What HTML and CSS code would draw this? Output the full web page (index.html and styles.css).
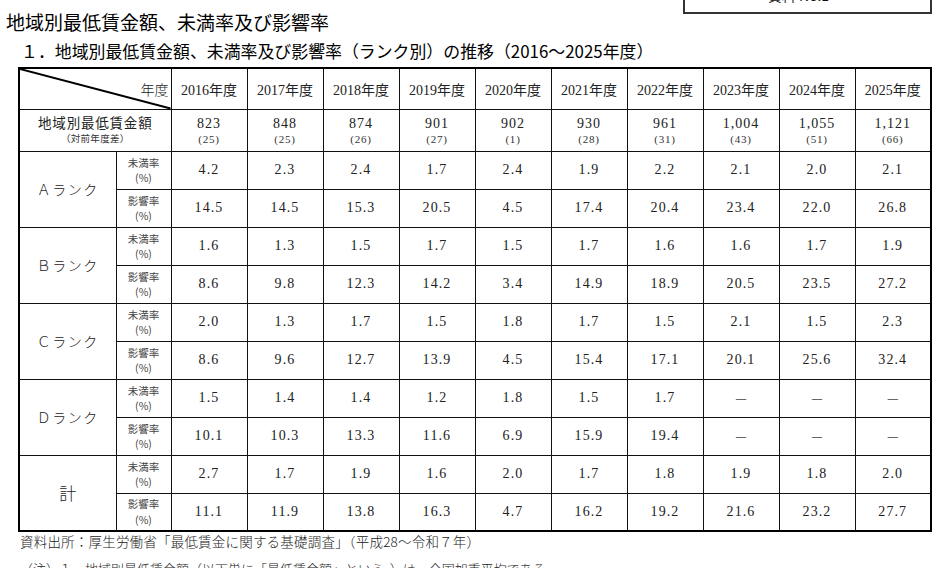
FILE: index.html
```html
<!DOCTYPE html>
<html lang="ja">
<head>
<meta charset="utf-8">
<title>地域別最低賃金額、未満率及び影響率</title>
<link rel="stylesheet" href="styles.css">
</head>
<body>
<div class="page">
  <div class="docno">資料 No.1</div>
  <h1 class="title">地域別最低賃金額、未満率及び影響率</h1>
  <h2 class="subtitle">１．地域別最低賃金額、未満率及び影響率（ランク別）の推移（2016～2025年度）</h2>
  <table class="tbl">
    <colgroup>
      <col class="c-rank"><col class="c-sub">
      <col><col><col><col><col><col><col><col><col><col>
    </colgroup>
    <tr class="r-head">
      <th colspan="2" class="corner">
        <svg class="diag" viewBox="0 0 100 100" preserveAspectRatio="none"><line x1="0" y1="0" x2="100" y2="100" stroke="#000" stroke-width="2" vector-effect="non-scaling-stroke"/></svg>
        <span class="corner-label">年度</span>
      </th>
      <th>2016年度</th><th>2017年度</th><th>2018年度</th><th>2019年度</th><th>2020年度</th><th>2021年度</th><th>2022年度</th><th>2023年度</th><th>2024年度</th><th>2025年度</th>
    </tr>
    <tr class="r-wage">
      <td colspan="2" class="wage-label"><div class="wl-main">地域別最低賃金額</div><div class="wl-sub">（対前年度差）</div></td>
      <td><div class="w-val">823</div><div class="w-diff">(25)</div></td>
      <td><div class="w-val">848</div><div class="w-diff">(25)</div></td>
      <td><div class="w-val">874</div><div class="w-diff">(26)</div></td>
      <td><div class="w-val">901</div><div class="w-diff">(27)</div></td>
      <td><div class="w-val">902</div><div class="w-diff">(1)</div></td>
      <td><div class="w-val">930</div><div class="w-diff">(28)</div></td>
      <td><div class="w-val">961</div><div class="w-diff">(31)</div></td>
      <td><div class="w-val">1,004</div><div class="w-diff">(43)</div></td>
      <td><div class="w-val">1,055</div><div class="w-diff">(51)</div></td>
      <td><div class="w-val">1,121</div><div class="w-diff">(66)</div></td>
    </tr>
    <tr class="r-data">
      <td rowspan="2" class="rank">Ａランク</td>
      <td class="sub"><div>未満率</div><div>(%)</div></td>
      <td>4.2</td><td>2.3</td><td>2.4</td><td>1.7</td><td>2.4</td><td>1.9</td><td>2.2</td><td>2.1</td><td>2.0</td><td>2.1</td>
    </tr>
    <tr class="r-data">
      <td class="sub"><div>影響率</div><div>(%)</div></td>
      <td>14.5</td><td>14.5</td><td>15.3</td><td>20.5</td><td>4.5</td><td>17.4</td><td>20.4</td><td>23.4</td><td>22.0</td><td>26.8</td>
    </tr>
    <tr class="r-data">
      <td rowspan="2" class="rank">Ｂランク</td>
      <td class="sub"><div>未満率</div><div>(%)</div></td>
      <td>1.6</td><td>1.3</td><td>1.5</td><td>1.7</td><td>1.5</td><td>1.7</td><td>1.6</td><td>1.6</td><td>1.7</td><td>1.9</td>
    </tr>
    <tr class="r-data">
      <td class="sub"><div>影響率</div><div>(%)</div></td>
      <td>8.6</td><td>9.8</td><td>12.3</td><td>14.2</td><td>3.4</td><td>14.9</td><td>18.9</td><td>20.5</td><td>23.5</td><td>27.2</td>
    </tr>
    <tr class="r-data">
      <td rowspan="2" class="rank">Ｃランク</td>
      <td class="sub"><div>未満率</div><div>(%)</div></td>
      <td>2.0</td><td>1.3</td><td>1.7</td><td>1.5</td><td>1.8</td><td>1.7</td><td>1.5</td><td>2.1</td><td>1.5</td><td>2.3</td>
    </tr>
    <tr class="r-data">
      <td class="sub"><div>影響率</div><div>(%)</div></td>
      <td>8.6</td><td>9.6</td><td>12.7</td><td>13.9</td><td>4.5</td><td>15.4</td><td>17.1</td><td>20.1</td><td>25.6</td><td>32.4</td>
    </tr>
    <tr class="r-data">
      <td rowspan="2" class="rank">Ｄランク</td>
      <td class="sub"><div>未満率</div><div>(%)</div></td>
      <td>1.5</td><td>1.4</td><td>1.4</td><td>1.2</td><td>1.8</td><td>1.5</td><td>1.7</td><td class="dash">－</td><td class="dash">－</td><td class="dash">－</td>
    </tr>
    <tr class="r-data">
      <td class="sub"><div>影響率</div><div>(%)</div></td>
      <td>10.1</td><td>10.3</td><td>13.3</td><td>11.6</td><td>6.9</td><td>15.9</td><td>19.4</td><td class="dash">－</td><td class="dash">－</td><td class="dash">－</td>
    </tr>
    <tr class="r-data">
      <td rowspan="2" class="rank total">計</td>
      <td class="sub"><div>未満率</div><div>(%)</div></td>
      <td>2.7</td><td>1.7</td><td>1.9</td><td>1.6</td><td>2.0</td><td>1.7</td><td>1.8</td><td>1.9</td><td>1.8</td><td>2.0</td>
    </tr>
    <tr class="r-data">
      <td class="sub"><div>影響率</div><div>(%)</div></td>
      <td>11.1</td><td>11.9</td><td>13.8</td><td>16.3</td><td>4.7</td><td>16.2</td><td>19.2</td><td>21.6</td><td>23.2</td><td>27.7</td>
    </tr>
  </table>
  <p class="source">資料出所：厚生労働省「最低賃金に関する基礎調査」（平成28～令和７年）</p>
  <p class="note">（注）１．地域別最低賃金額（以下単に「最低賃金額」という。）は、全国加重平均である。</p>
</div>
</body>
</html>
```

FILE: styles.css
```css
html, body {
  margin: 0;
  padding: 0;
  background: #fff;
  overflow: hidden;
}

.page {
  width: 947px;
  height: 568px;
  overflow: hidden;
  color: #111;
  font-family: "Liberation Serif", "Noto Sans CJK JP", serif;
}

.docno {
  width: 227px;
  height: 28px;
  margin: -16px 15px -3px auto;
  border: 1px solid #333;
  border-width: 0 2px 2px 2px;
  font-family: "Noto Sans CJK JP", sans-serif;
  font-size: 14px;
  line-height: 22px;
  text-align: center;
  padding-right: 18px;
  box-sizing: content-box;
}

.title {
  margin: 0 0 0 6px;
  font-family: "Noto Sans CJK JP", sans-serif;
  font-weight: 400;
  font-size: 19px;
  line-height: 22px;
  color: #000;
}

.subtitle {
  margin: 8px 0 0 21px;
  font-family: "Noto Sans CJK JP", sans-serif;
  font-weight: 400;
  font-size: 16.9px;
  line-height: 20px;
  color: #000;
}

.tbl {
  margin: 6px 0 0 18px;
  width: 914px;
  table-layout: fixed;
  border-collapse: collapse;
  border: 2px solid #000;
}

.c-rank { width: 97px; }
.c-sub { width: 55px; }

.tbl th,
.tbl td {
  border: 1px solid #111;
  padding: 0;
  text-align: center;
  vertical-align: middle;
  font-weight: 400;
}

.r-head { height: 41px; }
.r-wage { height: 42px; }
.r-data { height: 38px; }

.r-head th {
  font-size: 14px;
  color: #222;
}

.corner {
  position: relative;
  text-align: right !important;
}

.diag {
  position: absolute;
  left: 0;
  top: 0;
  width: 100%;
  height: 100%;
}

.corner-label {
  padding-right: 2px;
  font-weight: 300;
}

.wage-label {
  font-family: "Noto Sans CJK JP", sans-serif;
  color: #222;
  font-weight: 400;
}

.wl-main {
  font-size: 13.5px;
  line-height: 20px;
  letter-spacing: 0.8px;
  margin-top: -3px;
}

.wl-sub {
  font-size: 9.5px;
  line-height: 14px;
  letter-spacing: 0.3px;
  margin-top: -1px;
  color: #333;
}

.w-val {
  font-size: 14px;
  line-height: 17px;
  letter-spacing: 1px;
  color: #222;
}

.w-diff {
  font-size: 11px;
  line-height: 14px;
  letter-spacing: 0.8px;
  color: #333;
}

.r-data td {
  font-size: 14px;
  letter-spacing: 1.1px;
  color: #222;
}

.r-data td.sub {
  font-family: "Noto Sans CJK JP", sans-serif;
  font-weight: 400;
  font-size: 10.5px;
  line-height: 15.5px;
  letter-spacing: 0;
  color: #444;
}

.r-data td.rank {
  font-family: "Noto Sans CJK JP", sans-serif;
  font-weight: 300;
  font-size: 14px;
  letter-spacing: 1.5px;
  color: #222;
}

.r-data td.total {
  font-size: 17px;
  letter-spacing: 0;
}

.r-data td.dash {
  font-family: "Noto Sans CJK JP", sans-serif;
  font-weight: 300;
  letter-spacing: 0;
  color: #444;
}

.source {
  margin: 1px 0 0 20px;
  font-family: "Noto Sans CJK JP", sans-serif;
  font-weight: 300;
  font-size: 13.5px;
  line-height: 16px;
  letter-spacing: 0.2px;
  color: #222;
}

.note {
  margin: 12px 0 0 20px;
  font-family: "Noto Sans CJK JP", sans-serif;
  font-weight: 300;
  font-size: 13px;
  line-height: 16px;
  color: #222;
}
```
